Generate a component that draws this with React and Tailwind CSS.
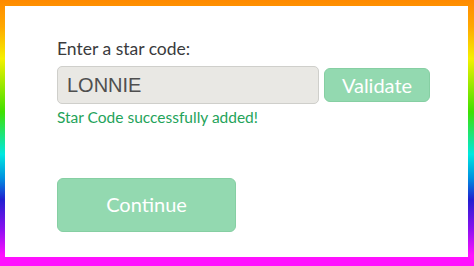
export default function App() {
  return (
    <div className="h-[266px] w-[474px] bg-[linear-gradient(to_bottom,#ff8a00_0%,#ffa800_10%,#f5f000_22%,#40e000_42%,#00e8e0_58%,#0090e0_67%,#2020d0_75%,#8a10f0_86%,#ff10ff_96%)] pl-[5px] pr-[6px] pt-[6px] pb-[9px]">
      <div className="flex h-full flex-col bg-white pl-[52px] pt-[31px] font-['Lato','Open_Sans',sans-serif]">
        <div className="text-[17.5px] leading-[24px] text-[#3a3b3d]">Enter a star code:</div>
        <div className="mt-[5px] flex items-center gap-[5px]">
          <div className="flex h-[38px] w-[262px] items-center rounded-[5px] border border-[#cfcfcb] bg-[#e9e8e4] pl-[9px] font-['Liberation_Sans',Arial,sans-serif] text-[20px] text-[#4f4f4f]">
            LONNIE
          </div>
          <button
            type="button"
            className="flex h-[34px] w-[106px] items-center justify-center rounded-[6px] border border-[#86cfa3] bg-[#93d9b0] text-[20px] text-white"
          >
            Validate
          </button>
        </div>
        <div className="mt-[3px] text-[15.5px] leading-[20px] text-[#24a35a]">Star Code successfully added!</div>
        <button
          type="button"
          className="mt-[51px] flex h-[54px] w-[179px] items-center justify-center rounded-[6px] border border-[#86cfa3] bg-[#93d9b0] pb-[3px] text-[20px] text-white"
        >
          Continue
        </button>
      </div>
    </div>
  )
}
